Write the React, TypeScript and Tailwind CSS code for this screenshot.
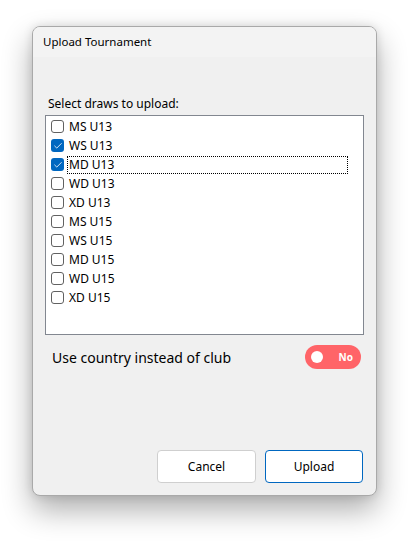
import { Check } from "lucide-react";

type Draw = { name: string; checked: boolean };

const draws: Draw[] = [
  { name: "MS U13", checked: false },
  { name: "WS U13", checked: true },
  { name: "MD U13", checked: true },
  { name: "WD U13", checked: false },
  { name: "XD U13", checked: false },
  { name: "MS U15", checked: false },
  { name: "WS U15", checked: false },
  { name: "MD U15", checked: false },
  { name: "WD U15", checked: false },
  { name: "XD U15", checked: false },
];

const focusedIndex = 2;

function CheckBox({ checked }: { checked: boolean }) {
  if (checked) {
    return (
      <span className="flex h-[13px] w-[13px] shrink-0 items-center justify-center rounded-[3px] bg-[#0067c0]">
        <Check className="h-[10px] w-[10px] text-white" strokeWidth={2} />
      </span>
    );
  }
  return (
    <span className="h-[13px] w-[13px] shrink-0 rounded-[3px] border border-[#616161] bg-white" />
  );
}

export default function App() {
  return (
    <div className="min-h-screen bg-white pl-[32px] pt-[26px] font-['Noto_Sans','Open_Sans',sans-serif] text-black">
      <div className="flex h-[470px] w-[345px] flex-col overflow-hidden rounded-[8px] border border-[#a9a9a9] bg-[#f0f0f0] shadow-[0_14px_30px_rgba(0,0,0,0.32),0_0_10px_rgba(0,0,0,0.12)]">
        {/* title bar */}
        <div className="flex h-[30px] shrink-0 items-center bg-[#f3f3f3] pl-[10px] text-[11.5px]">
          Upload Tournament
        </div>

        <div className="flex flex-1 flex-col px-[12px] pt-[39px]">
          <div className="pl-[3px] text-[12px] leading-[16px]">
            Select draws to upload:
          </div>

          {/* draw list */}
          <div className="mt-[3px] h-[220px] w-[319px] border border-[#828790] bg-white pl-[5px] pt-[1px]">
            {draws.map((d, i) => (
              <div key={d.name} className="flex h-[19px] items-center">
                <CheckBox checked={d.checked} />
                <span
                  className={
                    i === focusedIndex
                      ? "ml-[3px] flex h-[18px] w-[281px] items-center border border-dotted border-black pl-[1px] text-[12px]"
                      : "ml-[4px] pl-[1px] text-[12px]"
                  }
                >
                  {d.name}
                </span>
              </div>
            ))}
          </div>

          {/* country toggle */}
          <div className="mt-[10px] flex items-center justify-between pl-[7px] pr-[3px]">
            <span className="text-[14px]">Use country instead of club</span>
            <div className="flex h-[24px] w-[56px] items-center rounded-full bg-[#ff6468] pl-[6px] pr-[8px]">
              <span className="h-[12px] w-[12px] rounded-full bg-white" />
              <span className="ml-auto text-[10px] font-bold text-white">No</span>
            </div>
          </div>

          {/* action buttons */}
          <div className="mt-auto mb-[12px] flex justify-end gap-[9px] pr-[1px]">
            <button className="h-[33px] w-[99px] rounded-[4px] border border-[#cfcfcf] bg-white text-[12px]">
              Cancel
            </button>
            <button className="h-[33px] w-[98px] rounded-[4px] border border-[#0067c0] bg-white text-[12px]">
              Upload
            </button>
          </div>
        </div>
      </div>
    </div>
  );
}
